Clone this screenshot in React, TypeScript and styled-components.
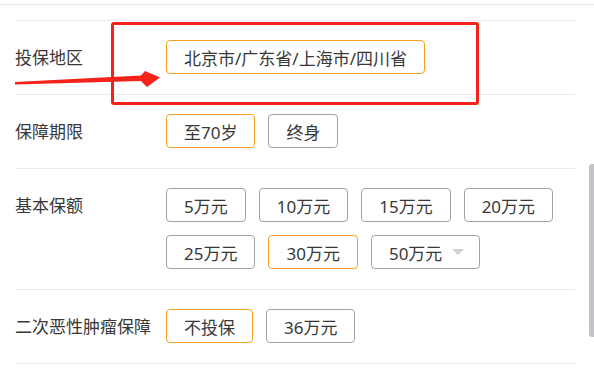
import React from "react";
import styled, { createGlobalStyle } from "styled-components";

const Global = createGlobalStyle`
  html, body { margin: 0; padding: 0; background: #fff; }
  body { font-family: "Noto Sans", "Noto Sans CJK SC", sans-serif; color: #333; }
`;

const Page = styled.div`
  position: relative;
  width: 594px;
  height: 375px;
  overflow: hidden;
  padding-top: 4px;
  box-sizing: border-box;
`;

const TopRule = styled.div`
  border-top: 1px solid #e8e8e8;
`;

const List = styled.div`
  margin: 15px 19px 0 15px;
  border-bottom: 1px solid #ebebeb;
`;

const Row = styled.div`
  display: flex;
  align-items: flex-start;
  border-top: 1px solid #ebebeb;
  padding: 19px 0 20px;
`;

const Label = styled.div`
  width: 151px;
  height: 34px;
  flex-shrink: 0;
  font-size: 17px;
  line-height: 36px;
  color: #383838;
  white-space: nowrap;
`;

const Options = styled.div`
  display: flex;
  flex-wrap: wrap;
  gap: 13px;
  flex: 1;
`;

const Option = styled.div<{ $active?: boolean }>`
  display: flex;
  align-items: center;
  height: 34px;
  box-sizing: border-box;
  padding: 0 17px;
  border: 1px solid ${(p) => (p.$active ? "#f5a020" : "#a3a3a3")};
  border-radius: 4px;
  font-size: 17px;
  color: #383838;
  white-space: nowrap;
  background: #fff;
`;

const Caret = styled.span`
  width: 0;
  height: 0;
  margin-left: 10px;
  margin-right: -2px;
  border-left: 6px solid transparent;
  border-right: 6px solid transparent;
  border-top: 6px solid #cfcfcf;
`;

const Highlight = styled.div`
  position: absolute;
  left: 111px;
  top: 22px;
  width: 368px;
  height: 83px;
  box-sizing: border-box;
  border: 3px solid #f4221a;
  border-radius: 3px;
  pointer-events: none;
`;

const Arrow = styled.svg`
  position: absolute;
  left: 0;
  top: 0;
  pointer-events: none;
`;

const Thumb = styled.div`
  position: absolute;
  right: 0;
  top: 164px;
  width: 5px;
  height: 173px;
  background: #c4c4c8;
  border-radius: 3px 0 0 3px;
`;

type Opt = { text: string; active?: boolean; caret?: boolean };
type Item = { label: string; options: Opt[] };

const items: Item[] = [
  { label: "投保地区", options: [{ text: "北京市/广东省/上海市/四川省", active: true }] },
  { label: "保障期限", options: [{ text: "至70岁", active: true }, { text: "终身" }] },
  {
    label: "基本保额",
    options: [
      { text: "5万元" },
      { text: "10万元" },
      { text: "15万元" },
      { text: "20万元" },
      { text: "25万元" },
      { text: "30万元", active: true },
      { text: "50万元", caret: true },
    ],
  },
  { label: "二次恶性肿瘤保障", options: [{ text: "不投保", active: true }, { text: "36万元" }] },
];

export default function App() {
  return (
    <Page>
      <Global />
      <TopRule />
      <List>
        {items.map((it) => (
          <Row key={it.label}>
            <Label>{it.label}</Label>
            <Options>
              {it.options.map((o) => (
                <Option key={o.text} $active={o.active}>
                  {o.text}
                  {o.caret && <Caret />}
                </Option>
              ))}
            </Options>
          </Row>
        ))}
      </List>
      <Highlight />
      <Arrow width="594" height="375" viewBox="0 0 594 375">
        <polygon
          points="15,82 141,75.5 145,71 160,77.5 147,87 141,81 15,84.5"
          fill="#f4221a"
        />
      </Arrow>
      <Thumb />
    </Page>
  );
}
